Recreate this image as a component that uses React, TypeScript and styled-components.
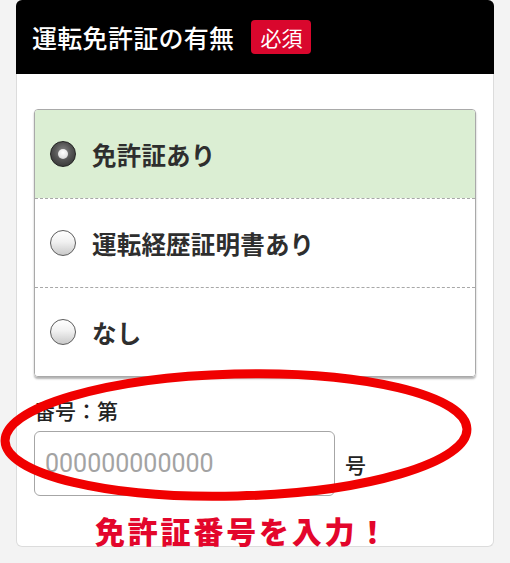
import React, { useState } from "react";
import styled, { createGlobalStyle } from "styled-components";

const GlobalStyle = createGlobalStyle`
  html, body {
    margin: 0;
    padding: 0;
    background: #f3f3f3;
  }
  body {
    font-family: "Noto Sans CJK JP", "Noto Sans", sans-serif;
    color: #222;
  }
`;

const Page = styled.div`
  position: relative;
  width: 510px;
  height: 563px;
  overflow: hidden;
  padding: 0 16px;
  box-sizing: border-box;
`;

const Card = styled.section`
  background: #fff;
  border: 1px solid #dcdcdc;
  border-top: none;
  border-radius: 6px;
`;

const Header = styled.header`
  display: flex;
  align-items: center;
  gap: 17px;
  height: 74px;
  margin: 0 -1px;
  padding-left: 16px;
  background: #000;
  color: #fff;
  border-radius: 6px 6px 0 0;
`;

const Title = styled.h2`
  margin: 0;
  font-size: 25px;
  font-weight: 500;
  letter-spacing: 0.3px;
`;

const Badge = styled.span`
  display: inline-flex;
  align-items: center;
  justify-content: center;
  width: 60px;
  height: 34px;
  border-radius: 4px;
  background: #d9072d;
  color: #fff;
  font-size: 21px;
  font-weight: 400;
`;

const Body = styled.div`
  display: flex;
  flex-direction: column;
  padding: 35px 17px 1px;
`;

const RadioGroup = styled.div`
  border: 1px solid #a9a9a9;
  border-radius: 4px;
  box-shadow: 0 2px 2px rgba(0, 0, 0, 0.3);
  overflow: hidden;
`;

const Option = styled.label<{ $checked: boolean }>`
  display: flex;
  align-items: center;
  gap: 16px;
  height: 89px;
  padding-left: 15px;
  background: ${({ $checked }) => ($checked ? "#dbeed3" : "#fff")};
  border-top: 1px dashed #a8a8a8;
  box-sizing: border-box;
  cursor: pointer;

  &:first-child {
    border-top: none;
    height: 88px;
  }
`;

const Dot = styled.span<{ $checked: boolean }>`
  position: relative;
  flex: none;
  width: 26px;
  height: 26px;
  border-radius: 50%;
  box-sizing: border-box;
  border: 1.5px solid ${({ $checked }) => ($checked ? "#222" : "#5c5c5c")};
  background: ${({ $checked }) =>
    $checked
      ? "radial-gradient(circle at 50% 40%, #8a8a8a 0%, #555 45%, #2a2a2a 100%)"
      : "linear-gradient(#ffffff 0%, #f1f1f1 45%, #c9c9c9 100%)"};

  &::after {
    content: "";
    display: ${({ $checked }) => ($checked ? "block" : "none")};
    position: absolute;
    left: 50%;
    top: 50%;
    width: 10px;
    height: 10px;
    margin: -5px 0 0 -5px;
    border-radius: 50%;
    background: radial-gradient(circle at 50% 35%, #fff 0%, #e4e4e4 60%, #bbb 100%);
  }
`;

const OptionText = styled.span`
  font-size: 24.5px;
  font-weight: 700;
  color: #2e2e2e;
  letter-spacing: 0.2px;
`;

const FieldLabel = styled.div`
  margin-top: 20px;
  font-size: 21px;
  font-weight: 500;
  line-height: 26px;
  color: #222;
`;

const FieldRow = styled.div`
  display: flex;
  align-items: center;
  gap: 10px;
  margin-top: 8px;
`;

const NumberInput = styled.input`
  width: 301px;
  height: 65px;
  box-sizing: border-box;
  padding: 0 10px;
  border: 1px solid #a6a6a6;
  border-radius: 6px;
  font-family: Roboto, "Liberation Sans", sans-serif;
  font-size: 25px;
  color: #222;
  background: #fff;
  outline: none;

  &::placeholder {
    color: #a3a3a3;
  }
`;

const Unit = styled.span`
  font-size: 21px;
  font-weight: 500;
  color: #222;
`;

const Note = styled.div`
  margin: 19px 0 0 61px;
  height: 30px;
  font-size: 30px;
  line-height: 30px;
  font-weight: 900;
  letter-spacing: 2.8px;
  color: #e3062b;
  white-space: nowrap;
`;

const Circle = styled.svg`
  position: absolute;
  left: 0;
  top: 0;
  pointer-events: none;
`;

const options = ["免許証あり", "運転経歴証明書あり", "なし"];

export default function App() {
  const [selected, setSelected] = useState(0);
  return (
    <Page>
      <GlobalStyle />
      <Card>
        <Header>
          <Title>運転免許証の有無</Title>
          <Badge>必須</Badge>
        </Header>
        <Body>
          <RadioGroup>
            {options.map((label, i) => (
              <Option
                key={label}
                $checked={selected === i}
                onClick={() => setSelected(i)}
              >
                <Dot $checked={selected === i} />
                <OptionText>{label}</OptionText>
              </Option>
            ))}
          </RadioGroup>
          <FieldLabel>番号：第</FieldLabel>
          <FieldRow>
            <NumberInput placeholder="000000000000" />
            <Unit>号</Unit>
          </FieldRow>
          <Note>免許証番号を入力！</Note>
        </Body>
      </Card>
      <Circle width="510" height="563" viewBox="0 0 510 563">
        <ellipse
          cx="236"
          cy="435"
          rx="231"
          ry="61"
          transform="rotate(-1.5 236 435)"
          fill="none"
          stroke="#f00000"
          strokeWidth="9"
        />
      </Circle>
    </Page>
  );
}
